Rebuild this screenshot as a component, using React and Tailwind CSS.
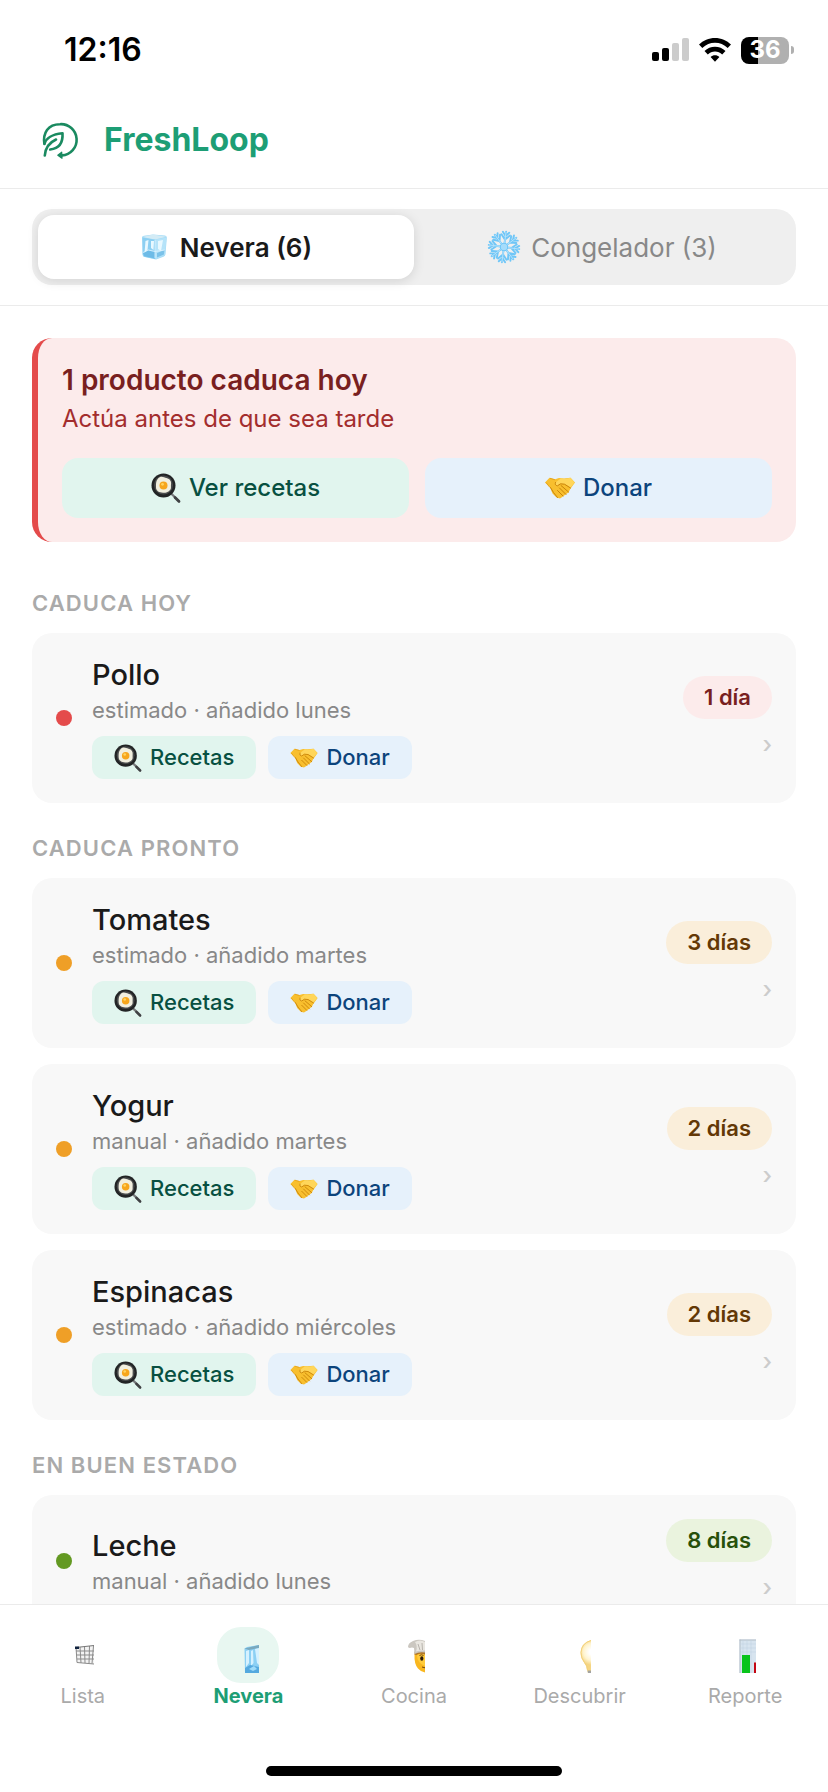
const sections = [
  { title: "Caduca hoy", items: [{ name: "Pollo", meta: "estimado · añadido lunes", days: "1 día", level: "today", actions: true }] },
  {
    title: "Caduca pronto",
    items: [
      { name: "Tomates", meta: "estimado · añadido martes", days: "3 días", level: "soon", actions: true },
      { name: "Yogur", meta: "manual · añadido martes", days: "2 días", level: "soon", actions: true },
      { name: "Espinacas", meta: "estimado · añadido miércoles", days: "2 días", level: "soon", actions: true },
    ],
  },
  { title: "En buen estado", items: [{ name: "Leche", meta: "manual · añadido lunes", days: "8 días", level: "good", actions: false }] },
];

const levels = {
  today: { dot: "bg-[#e44b4b]", badge: "bg-[#fcebeb] text-[#791f1f]" },
  soon: { dot: "bg-[#ef9f27]", badge: "bg-[#faeeda] text-[#633806]" },
  good: { dot: "bg-[#639922]", badge: "bg-[#eaf3de] text-[#27500a]" },
};

function LogoIcon() {
  return (
    <svg viewBox="0 0 46 48" className="h-12 w-[46px]" fill="none" stroke="#1a8a60" strokeWidth="2.6" strokeLinecap="round" strokeLinejoin="round">
      <path d="M6.400 28C4.600 17 10 8.200 22 8.200a15.600 15.600 0 0 1 2 31.200" />
      <path d="M19.800 39.200l3.900-3 .3 6z" fill="#1a8a60" strokeWidth="1.200" />
      <path d="M6.500 27.500c1.800-5.500 6-9 18-10.300.6 9.300-2.600 15.300-12.300 16.300" />
      <path d="M18 23.500C11.500 26.500 7.400 31 6.800 39.500" />
    </svg>
  );
}

function IceIcon({ className }) {
  return (
    <svg viewBox="0 0 28 28" className={className} aria-hidden="true">
      <path d="M2 4.500Q2 3 4 2.800L13 1.500 25 2.500Q27 2.800 26.800 5L25.500 21Q25.300 23 23.500 23.800L16 26.600 4.500 24Q2.600 23.500 2.500 21.500Z" fill="#a5dcf7" />
      <path d="M2.500 4 15 6.500 26.500 3.800 13 1.500Z" fill="#d3ebf5" />
      <path d="M2.500 4.500 15 6.800V26L4.500 23.800Q3 23.300 2.800 21.500Z" fill="#8ccff2" />
      <path d="M15 6.800 26.500 4.500 25 21.500 16 26Z" fill="#b5e3f9" />
      <path d="M5.500 8 8.500 7 7.500 17 4.500 20ZM11 8h3l-.5 9-2.500-2ZM18 8l5-1-2 11-3-2Z" fill="#e8f8ff" />
      <path d="M3 20 8 17.500 15 19 15 25.500 4.500 23.300ZM17 20 24.500 17 24 21.500 17 24.500Z" fill="#5cb0e0" opacity=".65" />
      <path d="M15 7v18M3 19.500 8.500 17l6.500 1.500 9.500-1.500" fill="none" stroke="#e0f4ff" strokeWidth=".8" />
    </svg>
  );
}

function SnowIcon() {
  return (
    <svg viewBox="-16 -16 32 32" className="h-[34px] w-[34px]" fill="none" stroke="#6fc6f7" strokeWidth="1.800" strokeLinecap="round" aria-hidden="true">
      {[8, 53, 98, 143, 188, 233, 278, 323].map((angle) => (
        <g key={angle} transform={`rotate(${angle})`}>
          <path d="M0-3V-14.500M0-7 -4-11.500M0-7 4-11.500M0-10.500-3-14M0-10.500 3-14" />
          <path d="M0-4V-14" stroke="#c5eaff" strokeWidth=".7" />
        </g>
      ))}
      <circle r="3.500" fill="#a5dcfb" strokeWidth="1" />
    </svg>
  );
}

function PanIcon({ className }) {
  return (
    <svg viewBox="0 0 30 30" className={className} aria-hidden="true">
      <path d="M19.500 20 28 28" stroke="#77797b" strokeWidth="2.400" strokeLinecap="round" />
      <path d="M24 24.500 28 28.500" stroke="#404244" strokeWidth="2.600" strokeLinecap="round" />
      <circle cx="12.500" cy="12.500" r="12" fill="#222425" />
      <circle cx="12.500" cy="12" r="9.500" fill="#4a4c4d" />
      <path d="M7.500 5c3-2.500 5.500-.5 8 0 3.500.8 5 3.500 4.500 6.500-.3 3 1 4.500-2.500 7-2.500 1.500-4 1.500-7 1-3.500-.3-5.500-2.500-5.500-5 0-2.800-.5-6.500 2.500-9.500z" fill="#f1efdf" />
      <circle cx="12.500" cy="12.500" r="4" fill="#f7a61c" />
      <circle cx="11.500" cy="11.300" r="1.400" fill="#ffd460" />
    </svg>
  );
}

function HandshakeIcon({ className }) {
  return (
    <svg viewBox="0 0 30 22" className={className} aria-hidden="true">
      <path d="M0 5.500 4.500.8 10 2.200 14 1l5 .5 6.500-.8L30 5.500 27 9.500 25 12.500 23.500 15.500 20.500 17.500 18 19.500 15 21.500 11.500 20.500 7.500 16.500 5 10.500Z" fill="#f8bf2e" />
      <path d="M10.500 5.500 16 1.300 20 2 25.500.8 29.500 5.500 25.500 10.500 19.500 7 15 6.800 12.500 8.800Q9.500 8.500 10.500 5.500Z" fill="#ffd65a" />
      <path d="M5.500 10.500 8.500 15.500 12.500 20.500M16 8.500l7.500 6.500M14.500 11l6.500 6.500M12.500 13.500l5.500 5.500M10.500 5.500Q9.500 8.500 12.500 8.800L15.500 6.800 19.500 7.200 25.500 11" fill="none" stroke="#c98309" strokeWidth="1" strokeLinecap="round" />
      <path d="M1 5.500 5 10.500M5 1.300 10 2.800" stroke="#e09c17" strokeWidth=".8" />
    </svg>
  );
}

function CartIcon() {
  return (
    <svg viewBox="0 0 20 36" className="h-9 w-5" fill="none" aria-hidden="true">
      <path d="M1.500 10 20 8.500V27L3 25.500Z" fill="#f3f3f3" />
      <path d="M2 10 3 25.500 20 27M6 10l1 16M10.500 9.500l.5 16.500M15.500 9l-.5 17.500M19.500 9l-1.500 17.500M2 14h18M2.500 18h17.500M3 22h17" stroke="#8b8b8b" strokeWidth="1" />
      <path d="M2 10.500 20 8.500" stroke="#777" strokeWidth="1.200" />
      <path d="M1 9.500h4v2.500H1z" fill="#10233f" />
    </svg>
  );
}

function ChefIcon() {
  return (
    <svg viewBox="0 0 17 36" className="h-9 w-[17px]" aria-hidden="true">
      <path d="M6.500 17Q6 27 10 31.500 13 35 17 35.500V15Z" fill="#f9b71f" />
      <path d="M9 18Q9 26 17 29V16Z" fill="#ffcb3c" />
      <path d="M6.500 17.500V14.500L17 14.500V17.500Q11 16 8.500 18Z" fill="#b0762a" />
      <path d="M0 10Q0 6 5 4 11 1.500 17 4V15.500Q11 14.500 6.500 17L6 11 4 10.500Q1 11.500 0 10Z" fill="#cbc7c0" />
      <path d="M7 5Q12 2 17 5V13.500Q12 13 8 14.500 10 9 7 5Z" fill="#e9e6e0" />
      <path d="M10 7 12 13M14 6 14.500 13" stroke="#aaa69e" strokeWidth=".8" />
      <ellipse cx="13.800" cy="21.500" rx="1.600" ry="2.200" fill="#2b1b0c" />
      <path d="M11.500 18.500Q13.500 17 15.500 18.500M14 30 17 30.800" fill="none" stroke="#714311" strokeWidth="1" />
    </svg>
  );
}

function BulbIcon() {
  return (
    <svg viewBox="0 0 12 36" className="h-9 w-3" aria-hidden="true">
      <defs>
        <radialGradient id="bulb" gradientUnits="userSpaceOnUse" cx="13" cy="15" r="13">
          <stop offset="0.2" stopColor="#ffffff" />
          <stop offset="0.65" stopColor="#fff4cf" />
          <stop offset="1" stopColor="#f5d583" />
        </radialGradient>
      </defs>
      <path d="M12 3Q2 6 1.500 15.500 1.500 21 5 25.500 8 29 8 33L9 36H12Z" fill="url(#bulb)" />
      <path d="M12 3.500Q2.500 6 2 15.500 2 21 5.500 25.500 8.500 29 8.500 33" fill="none" stroke="#f3d078" strokeWidth="1" />
      <path d="M8.500 33.500H12V36H9z" fill="#a3a3a0" />
    </svg>
  );
}

function ChartIcon() {
  return (
    <svg viewBox="0 0 17 36" className="h-9 w-[17px]" aria-hidden="true">
      <path d="M.500 2.500H17V36H.500Z" fill="#d7e4ef" />
      <path d="M1 2.500V36M.500 3H17" stroke="#b3bdc6" strokeWidth="1" />
      <path d="M4 3v33M8 3v33M12 3v33M1 7h16M1 11h16M1 15h16" stroke="#c5d5e3" strokeWidth=".6" />
      <path d="M3 18h8v18H3z" fill="#08c41b" />
      <path d="M15 25.500h2V36h-2z" fill="#c40713" />
    </svg>
  );
}

function NavIceIcon() {
  return (
    <svg viewBox="0 0 15 36" className="h-9 w-[15px]" aria-hidden="true">
      <path d="M.500 11.500 3 10 15 8V36H1Z" fill="#8cd0f4" />
      <path d="M.500 11.500 15 8v3L5 13Z" fill="#79a9be" />
      <path d="M2 14 5 13 5 26 2 30ZM7 14l2-1 .5 13L7 29ZM11 12l4-1V28l-2-2Z" fill="#d5f1ff" />
      <path d="M1 31 6 28 15 30V36H1Z" fill="#54a9df" />
      <path d="M5 32 10 29 13 32 9 34Z" fill="#9edbf9" />
    </svg>
  );
}

const tabs = [
  { label: "Lista", Icon: CartIcon },
  { label: "Nevera", Icon: NavIceIcon, active: true },
  { label: "Cocina", Icon: ChefIcon },
  { label: "Descubrir", Icon: BulbIcon },
  { label: "Reporte", Icon: ChartIcon },
];

function StatusBar() {
  return (
    <div className="flex h-[94px] shrink-0 items-center justify-between pl-16 pr-[34px] pt-[6px]">
      <span className="text-[32px] font-semibold leading-10 text-black">12:16</span>
      <div className="flex items-center gap-[10px]">
        <svg viewBox="0 0 37 24" className="h-6 w-[37px]" aria-hidden="true">
          <rect x="0" y="14" width="7" height="9" rx="2" />
          <rect x="10" y="10" width="7" height="13" rx="2" />
          <rect x="20" y="5" width="7" height="18" rx="2" fill="#ccc" />
          <rect x="30" y="0" width="7" height="23" rx="2" fill="#ccc" />
        </svg>
        <svg viewBox="0 0 32 24" className="h-6 w-8" aria-hidden="true">
          <path d="M16 0C22 0 28 2.500 32 6.600L28.700 10C25 6.500 20.800 4.800 16 4.800S7 6.500 3.300 10L0 6.600C4 2.500 10 0 16 0Z" />
          <path d="M16 8.800c4 0 7.600 1.500 10.500 4.300L23.200 16.500C21.200 14.600 18.800 13.600 16 13.600s-5.200 1-7.200 2.900L5.500 13.100C8.400 10.300 12 8.800 16 8.800Z" />
          <path d="M16 17.200c1.700 0 3.200.6 4.400 1.700L16 23.800 11.600 18.900c1.200-1.100 2.700-1.700 4.400-1.700Z" />
        </svg>
        <div className="flex items-center gap-[2px]">
          <div className="flex h-[27px] w-12 items-center justify-center rounded-lg bg-linear-to-r from-black from-35% to-[#b0b0b0] to-35% text-2xl font-bold leading-6 text-white">36</div>
          <div className="h-2 w-[3px] rounded-r-full bg-[#b0b0b0]" />
        </div>
      </div>
    </div>
  );
}

function ProductCard({ item }) {
  const level = levels[item.level];

  return (
    <li className="flex items-center rounded-[20px] bg-[#f8f8f8] p-6">
      <span className={`h-4 w-4 shrink-0 rounded-full ${level.dot}`} />
      <div className="ml-5 min-w-0 flex-1">
        <h3 className="text-[29px] font-medium leading-9 text-[#1a1a1a]">{item.name}</h3>
        <p className="mt-1 text-[22px] leading-[27px] text-[#888]">{item.meta}</p>
        {item.actions ? (
          <div className="mt-3 flex gap-3">
            <button type="button" className="flex h-[43px] items-center gap-2 rounded-xl bg-[#e1f5ee] px-[22px] text-[22px] font-medium text-[#085041]">
              <PanIcon className="h-7 w-7" />
              Recetas
            </button>
            <button type="button" className="flex h-[43px] items-center gap-2 rounded-xl bg-[#e6f1fb] px-[22px] text-[22px] font-medium text-[#0c447c]">
              <HandshakeIcon className="h-5 w-7" />
              Donar
            </button>
          </div>
        ) : null}
      </div>
      <div className="flex flex-col items-end gap-[10px]">
        <span className={`rounded-full px-[21px] py-2 text-[22px] font-semibold leading-[27px] ${level.badge}`}>{item.days}</span>
        <span className="text-2xl font-medium leading-[31px] text-[#ccc]">›</span>
      </div>
    </li>
  );
}

export default function App() {
  return (
    <div className="flex h-screen flex-col overflow-hidden bg-white font-['Inter','Liberation_Sans',sans-serif]">
      <StatusBar />

      <header className="flex h-[95px] shrink-0 items-center gap-5 border-b border-[#ebebeb] pb-[2px] pl-[38px]">
        <LogoIcon />
        <h1 className="text-[32px] font-bold leading-10 text-[#1d9e75]">FreshLoop</h1>
      </header>

      <div className="shrink-0 border-b border-[#ebebeb] px-8 py-5">
        <div className="flex rounded-[20px] bg-[#efefef] p-[6px]">
          <button type="button" className="flex h-16 flex-1 items-center justify-center gap-3 rounded-2xl bg-white text-[26px] font-semibold text-[#1a1a1a] shadow-[0_2px_12px_rgba(0,0,0,0.12)]">
            <IceIcon className="h-7 w-7" />
            Nevera (6)
          </button>
          <button type="button" className="flex h-16 flex-1 items-center justify-center gap-[10px] text-[26px] text-[#888]">
            <SnowIcon />
            Congelador (3)
          </button>
        </div>
      </div>

      <main className="min-h-0 flex-1 overflow-hidden px-8 pt-8">
        <section className="rounded-[20px] border-l-[6px] border-[#e44b4b] bg-[#fcebeb] p-6">
          <h2 className="text-[28px] font-semibold leading-9 text-[#791f1f]">1 producto caduca hoy</h2>
          <p className="mt-1 text-2xl leading-[34px] text-[#a32d2d]">Actúa antes de que sea tarde</p>
          <div className="mt-[22px] flex gap-4">
            <button type="button" className="flex h-[60px] flex-1 items-center justify-center gap-2 rounded-2xl bg-[#e1f5ee] text-2xl font-medium text-[#085041]">
              <PanIcon className="h-[30px] w-[30px]" />
              Ver recetas
            </button>
            <button type="button" className="flex h-[60px] flex-1 items-center justify-center gap-2 rounded-2xl bg-[#e6f1fb] text-2xl font-medium text-[#0c447c]">
              <HandshakeIcon className="h-[22px] w-[30px]" />
              Donar
            </button>
          </div>
        </section>

        <div className="mt-4">
          {sections.map((section) => (
            <section key={section.title}>
              <h2 className="pb-4 pt-8 text-[22px] font-semibold uppercase leading-[27px] tracking-wider text-[#aaa]">{section.title}</h2>
              <ul className="flex flex-col gap-4">
                {section.items.map((item) => (
                  <ProductCard key={item.name} item={item} />
                ))}
              </ul>
            </section>
          ))}
        </div>
      </main>

      <nav className="shrink-0 border-t border-[#ebebeb] bg-white pb-4 pt-[22px]">
        <div className="flex">
          {tabs.map(({ label, Icon, active }) => (
            <a key={label} href={`#${label.toLowerCase()}`} className={`flex flex-1 flex-col items-center text-xl leading-[26px] ${active ? "font-bold text-[#1d9e75]" : "text-[#aaa]"}`}>
              <span className={`flex h-14 w-[62px] items-end justify-end rounded-3xl pb-[10px] pr-[20px] ${active ? "bg-[#e8f7f1]" : ""}`}>
                <Icon />
              </span>
              {label}
            </a>
          ))}
        </div>
        <div className="mx-auto mt-[57px] h-[10px] w-[296px] rounded-full bg-black" />
      </nav>
    </div>
  );
}
